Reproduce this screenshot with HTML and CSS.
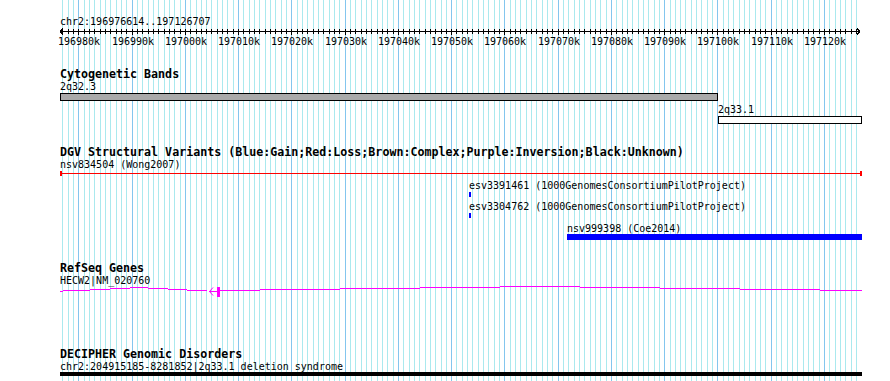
FILE: index.html
```html
<!DOCTYPE html>
<html>
<head>
  <meta charset="utf-8">
  <title>chr2:196976614..197126707</title>
  <link rel="stylesheet" href="styles.css">
</head>
<body>
<div class="browser">
  <!-- grid and ruler ticks are drawn by the script below -->
  <svg class="grid" id="grid" width="890" height="381"></svg>

  <div class="tracks">
    <div class="ruler">
      <div class="ruler-label">chr2:196976614..197126707</div>
      <svg class="scale" id="scale" width="890" height="7"></svg>
      <div class="tick-labels" id="tickLabels"></div>
    </div>

    <div class="track cyto">
      <div class="track-title">Cytogenetic Bands</div>
      <div class="lane lane-band">
        <span class="feature-label" data-start="196976614">2q32.3</span>
        <div class="band band-grey" data-start="196976614" data-end="197100100"></div>
      </div>
      <div class="lane lane-band">
        <span class="feature-label" data-start="197100100">2q33.1</span>
        <div class="band band-white" data-start="197100100" data-end="197127100"></div>
      </div>
    </div>

    <div class="track dgv">
      <div class="track-title">DGV Structural Variants (Blue:Gain;Red:Loss;Brown:Complex;Purple:Inversion;Black:Unknown)</div>
      <div class="lane lane-loss">
        <span class="feature-label" data-start="196976614">nsv834504 (Wong2007)</span>
        <div class="variant variant-loss" data-start="196976614" data-end="197127100"></div>
      </div>
      <div class="lane lane-tick">
        <span class="feature-label" data-start="197053400">esv3391461 (1000GenomesConsortiumPilotProject)</span>
        <div class="variant variant-gain tick" data-start="197053400" data-end="197053700"></div>
      </div>
      <div class="lane lane-tick">
        <span class="feature-label" data-start="197053400">esv3304762 (1000GenomesConsortiumPilotProject)</span>
        <div class="variant variant-gain tick" data-start="197053400" data-end="197053700"></div>
      </div>
      <div class="lane lane-bar">
        <span class="feature-label" data-start="197071750">nsv999398 (Coe2014)</span>
        <div class="variant variant-gain bar" data-start="197071750" data-end="197127100"></div>
      </div>
    </div>

    <div class="track refseq">
      <div class="track-title">RefSeq Genes</div>
      <div class="lane lane-gene">
        <span class="feature-label" data-start="196976614">HECW2|NM_020760</span>
        <svg class="gene" width="890" height="14" shape-rendering="crispEdges">
          <g stroke="#ff00ff" stroke-width="1">
            <line x1="60" y1="7.5" x2="63" y2="7.5"/>
            <line x1="63" y1="6.5" x2="90" y2="6.5"/>
            <line x1="90" y1="5.5" x2="110" y2="5.5"/>
            <line x1="110" y1="4.5" x2="130" y2="4.5"/>
            <line x1="130" y1="3.5" x2="148" y2="3.5"/>
            <line x1="148" y1="4.5" x2="168" y2="4.5"/>
            <line x1="168" y1="5.5" x2="187" y2="5.5"/>
            <line x1="187" y1="6.5" x2="207" y2="6.5"/>
            <line x1="209" y1="7.5" x2="217" y2="7.5"/>
            <line x1="220" y1="6.5" x2="260" y2="6.5"/>
            <line x1="260" y1="5.5" x2="340" y2="5.5"/>
            <line x1="340" y1="4.5" x2="420" y2="4.5"/>
            <line x1="420" y1="3.5" x2="500" y2="3.5"/>
            <line x1="500" y1="2.5" x2="580" y2="2.5"/>
            <line x1="580" y1="3.5" x2="660" y2="3.5"/>
            <line x1="660" y1="4.5" x2="740" y2="4.5"/>
            <line x1="740" y1="5.5" x2="820" y2="5.5"/>
            <line x1="820" y1="6.5" x2="862" y2="6.5"/>
          </g>
          <path d="M213 3.5 L209.5 7.5 L213 11.5" fill="none" stroke="#ff00ff" stroke-width="1" shape-rendering="auto"/>
          <rect x="217" y="3" width="3" height="10" fill="#ff00ff"/>
        </svg>
      </div>
    </div>

    <div class="track decipher">
      <div class="track-title">DECIPHER Genomic Disorders</div>
      <div class="lane lane-disorder">
        <span class="feature-label" data-start="196976614">chr2:204915185-8281852|2q33.1 deletion syndrome</span>
        <div class="disorder" data-start="196976614" data-end="197127100"></div>
      </div>
    </div>
  </div>
</div>

<script>
  var START = 196976614;
  var END = 197126707;
  var X0 = 60.3;          // pixel of START
  var PX_PER_BP = 0.005326;
  var NS = 'http://www.w3.org/2000/svg';

  function toX(bp) {
    return X0 + (bp - START) * PX_PER_BP;
  }

  function svgLine(parent, x1, y1, x2, y2, color) {
    var l = document.createElementNS(NS, 'line');
    l.setAttribute('x1', x1);
    l.setAttribute('y1', y1);
    l.setAttribute('x2', x2);
    l.setAttribute('y2', y2);
    l.setAttribute('stroke', color);
    parent.appendChild(l);
  }

  // grid lines every 1k, darker every 10k
  var grid = document.getElementById('grid');
  var scale = document.getElementById('scale');
  var tickLabels = document.getElementById('tickLabels');
  for (var k = Math.ceil(START / 1000); k * 1000 <= END; k++) {
    var x = Math.round(toX(k * 1000)) + 0.5;
    var major = k % 10 === 0;
    svgLine(grid, x, 0, x, 381, major ? '#84c6ee' : '#aae9ee');
    svgLine(scale, x, 1, x, major ? 7 : 6, '#000');
    if (major) {
      var span = document.createElement('span');
      span.className = 'tick-label';
      span.textContent = k + 'k';
      span.style.left = Math.round(x - 21) + 'px';
      tickLabels.appendChild(span);
    }
  }

  // ruler axis with arrow heads
  svgLine(scale, 60, 3.5, 860, 3.5, '#000');
  svgLine(scale, 60, 3.5, 63, 0.5, '#000');
  svgLine(scale, 60, 3.5, 63, 6.5, '#000');
  svgLine(scale, 860, 3.5, 857, 0.5, '#000');
  svgLine(scale, 860, 3.5, 857, 6.5, '#000');

  // place labels and glyphs from their coordinates
  var items = document.querySelectorAll('[data-start]');
  for (var i = 0; i < items.length; i++) {
    var el = items[i];
    var left = Math.max(60, Math.round(toX(+el.dataset.start)));
    el.style.left = left + 'px';
    if (el.dataset.end) {
      var right = Math.min(862, Math.round(toX(+el.dataset.end)));
      el.style.width = (right - left) + 'px';
    }
  }
</script>
</body>
</html>
```

FILE: styles.css
```css
html, body {
  margin: 0;
  background: #ffffff;
}

.browser {
  position: relative;
  width: 890px;
  height: 381px;
  overflow: hidden;
  background: #ffffff;
  font-family: "DejaVu Sans Mono", "Liberation Mono", monospace;
  font-size: 10px;
  line-height: 13px;
  color: #000;
}

.grid {
  position: absolute;
  top: 0;
  left: 0;
  shape-rendering: crispEdges;
}

.tracks {
  position: relative;
}

/* ruler */
.ruler {
  padding-top: 15px;
}

.ruler-label {
  padding-left: 60px;
  height: 13px;
}

.scale {
  display: block;
  shape-rendering: crispEdges;
}

.tick-labels {
  position: relative;
  height: 13px;
}

.tick-label {
  position: absolute;
  top: 0;
}

/* tracks */
.track-title {
  font-weight: bold;
  font-size: 11.65px;
  line-height: 12px;
  height: 12px;
  padding-left: 60px;
  white-space: nowrap;
}

.cyto {
  margin-top: 20px;
}

.dgv {
  margin-top: 22px;
}

.refseq {
  margin-top: 22px;
}

.decipher {
  margin-top: 50px;
}

.lane {
  position: relative;
}

.feature-label {
  position: absolute;
  top: 0;
  white-space: nowrap;
}

.lane-band {
  height: 23px;
}

.lane-band + .lane-band {
  height: 21px;
}

.band {
  position: absolute;
  top: 13px;
  height: 8px;
  box-sizing: border-box;
  border: 1px solid #000;
}

.band-grey {
  background: #aaaaaa;
}

.band-white {
  background: #ffffff;
}

.lane-loss {
  height: 21px;
}

.variant-loss {
  position: absolute;
  top: 15px;
  height: 1px;
  background: #ff0000;
}

.variant-loss::before,
.variant-loss::after {
  content: "";
  position: absolute;
  top: -2px;
  width: 2px;
  height: 5px;
  background: #ff0000;
}

.variant-loss::before {
  left: 0;
}

.variant-loss::after {
  right: 0;
}

.lane-tick {
  height: 21px;
}

.lane-tick + .lane-tick {
  height: 22px;
}

.variant-gain {
  position: absolute;
  background: #0000ff;
}

.tick {
  top: 13px;
  height: 5px;
  min-width: 2px;
}

.lane-bar {
  height: 18px;
}

.bar {
  top: 12px;
  height: 6px;
}

.lane-gene {
  height: 24px;
}

.gene {
  position: absolute;
  top: 10px;
  left: 0;
}

.lane-disorder {
  height: 17px;
}

.disorder {
  position: absolute;
  top: 12px;
  height: 4px;
  background: #000;
}
```
